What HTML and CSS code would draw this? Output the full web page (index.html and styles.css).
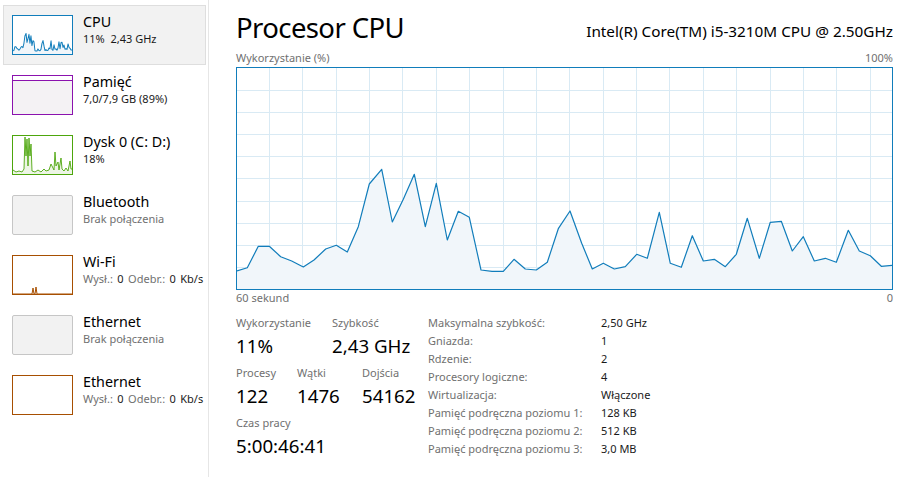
FILE: index.html
```html
<!DOCTYPE html>
<html lang="pl">
<head>
<meta charset="utf-8">
<title>Procesor CPU</title>
<link rel="stylesheet" href="styles.css">
</head>
<body>
<div class="app">
  <nav class="sidebar">
    <div class="item selected">
      <div class="thumb thumb-cpu">
        <svg viewBox="0 0 655 221" preserveAspectRatio="none" width="59" height="38">
          <polygon class="cpu-fill" points="0,203 10.3,199.7 21.3,178.3 32.3,178.3 43.7,188.7 54.7,193 66.3,199 77,192 88.7,181 99.3,177.3 110.3,184 121.3,158.7 132.3,116 144.7,101.3 155.3,154 166.3,131.3 177.3,106.3 188.3,158.7 199.3,115.3 210.3,172 221.3,143.3 232.3,149.3 244,202 255,203.3 266.3,203.3 277,191.3 288.3,201 299.3,202 310.3,194.3 321.3,160.7 333,143 344.7,175.3 355.3,201 366.3,195.3 377.3,201 388.3,198.7 399.7,186.3 410.3,190.3 422.3,144.3 433.3,195.3 444.3,199.3 455.3,167.7 466.3,193 477.3,191.3 488.3,198.7 499.3,186.3 510.3,150.3 522.3,190.3 533.3,154.3 544.3,153.3 555.3,183 566.3,168.7 577.3,193 588.3,190.3 599.3,194.3 611.3,162.3 622.3,183 633.3,187.7 644.3,198.3 655,197.3 655,221 0,221"/>
          <polyline class="cpu-line" vector-effect="non-scaling-stroke" points="0,203 10.3,199.7 21.3,178.3 32.3,178.3 43.7,188.7 54.7,193 66.3,199 77,192 88.7,181 99.3,177.3 110.3,184 121.3,158.7 132.3,116 144.7,101.3 155.3,154 166.3,131.3 177.3,106.3 188.3,158.7 199.3,115.3 210.3,172 221.3,143.3 232.3,149.3 244,202 255,203.3 266.3,203.3 277,191.3 288.3,201 299.3,202 310.3,194.3 321.3,160.7 333,143 344.7,175.3 355.3,201 366.3,195.3 377.3,201 388.3,198.7 399.7,186.3 410.3,190.3 422.3,144.3 433.3,195.3 444.3,199.3 455.3,167.7 466.3,193 477.3,191.3 488.3,198.7 499.3,186.3 510.3,150.3 522.3,190.3 533.3,154.3 544.3,153.3 555.3,183 566.3,168.7 577.3,193 588.3,190.3 599.3,194.3 611.3,162.3 622.3,183 633.3,187.7 644.3,198.3 655,197.3"/>
        </svg>
      </div>
      <div class="info">
        <div class="name">CPU</div>
        <div class="sub dark">11%&nbsp; 2,43 GHz</div>
      </div>
    </div>

    <div class="item">
      <div class="thumb thumb-mem"><div class="mem-fill"></div></div>
      <div class="info">
        <div class="name">Pamięć</div>
        <div class="sub dark">7,0/7,9 GB (89%)</div>
      </div>
    </div>

    <div class="item">
      <div class="thumb thumb-disk">
        <svg viewBox="0 0 59 38" width="59" height="38">
          <polygon class="disk-fill" points="0,34 3,36 6,35 9,36 11,33 12,1 13,20 14,3 15,30 16,2 17,20 18,8 19,35 22,36 25,34 28,36 31,33 33,35 36,34 38,28 40,32 41,34 42,16 43,30 45,26 46,34 48,22 49,33 51,35 53,32 55,35 57,25 58,33 59,33 59,38 0,38"/>
          <polyline class="disk-line" points="0,34 3,36 6,35 9,36 11,33 12,1 13,20 14,3 15,30 16,2 17,20 18,8 19,35 22,36 25,34 28,36 31,33 33,35 36,34 38,28 40,32 41,34 42,16 43,30 45,26 46,34 48,22 49,33 51,35 53,32 55,35 57,25 58,33 59,33"/>
        </svg>
      </div>
      <div class="info">
        <div class="name">Dysk 0 (C: D:)</div>
        <div class="sub dark">18%</div>
      </div>
    </div>

    <div class="item">
      <div class="thumb thumb-off"></div>
      <div class="info">
        <div class="name">Bluetooth</div>
        <div class="sub">Brak połączenia</div>
      </div>
    </div>

    <div class="item">
      <div class="thumb thumb-net">
        <svg viewBox="0 0 59 38" width="59" height="38">
          <polyline class="net-line" points="0,38 19,38 20,32 21,38 22,38 23,31 24,38 59,38"/>
        </svg>
      </div>
      <div class="info">
        <div class="name">Wi-Fi</div>
        <div class="sub net">Wysł.: <span class="dark">0</span> Odebr.: <span class="dark">0 Kb/s</span></div>
      </div>
    </div>

    <div class="item">
      <div class="thumb thumb-off"></div>
      <div class="info">
        <div class="name">Ethernet</div>
        <div class="sub">Brak połączenia</div>
      </div>
    </div>

    <div class="item">
      <div class="thumb thumb-net"></div>
      <div class="info">
        <div class="name">Ethernet</div>
        <div class="sub net">Wysł.: <span class="dark">0</span> Odebr.: <span class="dark">0 Kb/s</span></div>
      </div>
    </div>
  </nav>

  <main class="main">
    <header class="head">
      <h1 class="title">Procesor CPU</h1>
      <div class="model">Intel(R) Core(TM) i5-3210M CPU @ 2.50GHz</div>
    </header>

    <div class="axis axis-top"><span>Wykorzystanie (%)</span><span>100%</span></div>

    <div class="chart">
      <svg viewBox="0 0 655 221" width="655" height="221">
        <g class="grid">
          <line x1="32.5" y1="0" x2="32.5" y2="221"/>
          <line x1="65.5" y1="0" x2="65.5" y2="221"/>
          <line x1="99.5" y1="0" x2="99.5" y2="221"/>
          <line x1="132.5" y1="0" x2="132.5" y2="221"/>
          <line x1="165.5" y1="0" x2="165.5" y2="221"/>
          <line x1="199.5" y1="0" x2="199.5" y2="221"/>
          <line x1="232.5" y1="0" x2="232.5" y2="221"/>
          <line x1="266.5" y1="0" x2="266.5" y2="221"/>
          <line x1="299.5" y1="0" x2="299.5" y2="221"/>
          <line x1="332.5" y1="0" x2="332.5" y2="221"/>
          <line x1="366.5" y1="0" x2="366.5" y2="221"/>
          <line x1="399.5" y1="0" x2="399.5" y2="221"/>
          <line x1="432.5" y1="0" x2="432.5" y2="221"/>
          <line x1="466.5" y1="0" x2="466.5" y2="221"/>
          <line x1="499.5" y1="0" x2="499.5" y2="221"/>
          <line x1="533.5" y1="0" x2="533.5" y2="221"/>
          <line x1="566.5" y1="0" x2="566.5" y2="221"/>
          <line x1="599.5" y1="0" x2="599.5" y2="221"/>
          <line x1="633.5" y1="0" x2="633.5" y2="221"/>
          <line x1="0" y1="22.5" x2="655" y2="22.5"/>
          <line x1="0" y1="44.5" x2="655" y2="44.5"/>
          <line x1="0" y1="66.5" x2="655" y2="66.5"/>
          <line x1="0" y1="88.5" x2="655" y2="88.5"/>
          <line x1="0" y1="110.5" x2="655" y2="110.5"/>
          <line x1="0" y1="133.5" x2="655" y2="133.5"/>
          <line x1="0" y1="155.5" x2="655" y2="155.5"/>
          <line x1="0" y1="177.5" x2="655" y2="177.5"/>
          <line x1="0" y1="199.5" x2="655" y2="199.5"/>
        </g>
        <polygon class="cpu-fill" points="0,203 10.3,199.7 21.3,178.3 32.3,178.3 43.7,188.7 54.7,193 66.3,199 77,192 88.7,181 99.3,177.3 110.3,184 121.3,158.7 132.3,116 144.7,101.3 155.3,154 166.3,131.3 177.3,106.3 188.3,158.7 199.3,115.3 210.3,172 221.3,143.3 232.3,149.3 244,202 255,203.3 266.3,203.3 277,191.3 288.3,201 299.3,202 310.3,194.3 321.3,160.7 333,143 344.7,175.3 355.3,201 366.3,195.3 377.3,201 388.3,198.7 399.7,186.3 410.3,190.3 422.3,144.3 433.3,195.3 444.3,199.3 455.3,167.7 466.3,193 477.3,191.3 488.3,198.7 499.3,186.3 510.3,150.3 522.3,190.3 533.3,154.3 544.3,153.3 555.3,183 566.3,168.7 577.3,193 588.3,190.3 599.3,194.3 611.3,162.3 622.3,183 633.3,187.7 644.3,198.3 655,197.3 655,221 0,221"/>
        <polyline class="cpu-line main-line" points="0,203 10.3,199.7 21.3,178.3 32.3,178.3 43.7,188.7 54.7,193 66.3,199 77,192 88.7,181 99.3,177.3 110.3,184 121.3,158.7 132.3,116 144.7,101.3 155.3,154 166.3,131.3 177.3,106.3 188.3,158.7 199.3,115.3 210.3,172 221.3,143.3 232.3,149.3 244,202 255,203.3 266.3,203.3 277,191.3 288.3,201 299.3,202 310.3,194.3 321.3,160.7 333,143 344.7,175.3 355.3,201 366.3,195.3 377.3,201 388.3,198.7 399.7,186.3 410.3,190.3 422.3,144.3 433.3,195.3 444.3,199.3 455.3,167.7 466.3,193 477.3,191.3 488.3,198.7 499.3,186.3 510.3,150.3 522.3,190.3 533.3,154.3 544.3,153.3 555.3,183 566.3,168.7 577.3,193 588.3,190.3 599.3,194.3 611.3,162.3 622.3,183 633.3,187.7 644.3,198.3 655,197.3"/>
      </svg>
    </div>

    <div class="axis axis-bottom"><span>60 sekund</span><span>0</span></div>

    <section class="stats">
      <div class="dyn">
        <div class="row">
          <div class="stat w96"><div class="label">Wykorzystanie</div><div class="value">11%</div></div>
          <div class="stat"><div class="label">Szybkość</div><div class="value">2,43 GHz</div></div>
        </div>
        <div class="row">
          <div class="stat w61"><div class="label">Procesy</div><div class="value">122</div></div>
          <div class="stat w65"><div class="label">Wątki</div><div class="value">1476</div></div>
          <div class="stat"><div class="label">Dojścia</div><div class="value">54162</div></div>
        </div>
        <div class="row">
          <div class="stat"><div class="label">Czas pracy</div><div class="value">5:00:46:41</div></div>
        </div>
      </div>
      <dl class="specs">
        <dt>Maksymalna szybkość:</dt><dd>2,50 GHz</dd>
        <dt>Gniazda:</dt><dd>1</dd>
        <dt>Rdzenie:</dt><dd>2</dd>
        <dt>Procesory logiczne:</dt><dd>4</dd>
        <dt>Wirtualizacja:</dt><dd>Włączone</dd>
        <dt>Pamięć podręczna poziomu 1:</dt><dd>128 KB</dd>
        <dt>Pamięć podręczna poziomu 2:</dt><dd>512 KB</dd>
        <dt>Pamięć podręczna poziomu 3:</dt><dd>3,0 MB</dd>
      </dl>
    </section>
  </main>
</div>
</body>
</html>
```

FILE: styles.css
```css
* { box-sizing: border-box; }

html, body {
  margin: 0;
  padding: 0;
  background: #ffffff;
}

body {
  font-family: "Noto Sans", "Open Sans", sans-serif;
  color: #000000;
  width: 912px;
  height: 477px;
  overflow: hidden;
}

.app {
  display: flex;
  height: 477px;
}

/* ---------- sidebar ---------- */
.sidebar {
  width: 209px;
  flex: 0 0 209px;
  border-right: 1px solid #e6e6e6;
  padding-top: 5px;
  padding-left: 3px;
}

.item {
  display: flex;
  align-items: flex-start;
  width: 203px;
  height: 60px;
  border: 1px solid transparent;
  padding: 9px 0 0 8px;
}

.item.selected {
  background: #f2f2f2;
  border-color: #dedede;
}

.thumb {
  width: 61px;
  height: 40px;
  flex: 0 0 61px;
  border: 1px solid;
  background: #ffffff;
  overflow: hidden;
}

.thumb svg { display: block; }

.thumb-cpu { border-color: #117dbb; }
.thumb-mem { border-color: #8b12ae; background: #ffffff; }
.thumb-disk { border-color: #4da60c; }
.thumb-net { border-color: #a74f01; }
.thumb-off {
  border-color: #c6c6c6;
  background: #f2f2f2;
  border-radius: 2px;
}

.mem-fill {
  margin-top: 4px;
  height: 34px;
  border-top: 1px solid #8b12ae;
  background: #f4f2f4;
}

.cpu-fill { fill: #f1f6fa; }
.cpu-line { fill: none; stroke: #117dbb; stroke-width: 1; stroke-linejoin: round; }
.main-line { stroke-width: 1.2; }
.disk-fill { fill: #edf5e5; }
.disk-line { fill: none; stroke: #4da60c; stroke-width: 0.9; }
.net-line { fill: none; stroke: #a74f01; stroke-width: 1; }

.info {
  margin-left: 10px;
  margin-top: -2px;
}

.name {
  font-size: 14.3px;
  line-height: 18px;
  color: #000000;
}

.sub {
  font-size: 11px;
  line-height: 15px;
  color: #707070;
  white-space: nowrap;
}

.sub.net { word-spacing: 1.6px; }

.dark { color: #1a1a1a; }

/* ---------- main ---------- */
.main {
  flex: 1;
  padding-left: 27px;
  padding-right: 19px;
}

.head {
  display: flex;
  justify-content: space-between;
  align-items: flex-start;
  height: 51px;
}

.title {
  margin: 0;
  padding-top: 8px;
  font-size: 27.5px;
  line-height: 40px;
  font-weight: 400;
  letter-spacing: -0.6px;
}

.model {
  padding-top: 21px;
  font-size: 15.3px;
  line-height: 20px;
}

.axis {
  display: flex;
  justify-content: space-between;
  font-size: 11px;
  line-height: 14px;
  color: #707070;
}

.axis-top {
  margin-bottom: 2px;
}

.axis-bottom {
  margin-top: 1px;
}

.chart {
  width: 657px;
  height: 223px;
  border: 1px solid #117dbb;
}

.chart svg { display: block; }

.grid line {
  stroke: #d9eaf4;
  stroke-width: 1;
}

/* ---------- stats ---------- */
.stats {
  display: flex;
  margin-top: 9px;
}

.dyn {
  width: 192px;
  flex: 0 0 192px;
  padding-top: 1px;
}

.row {
  display: flex;
  height: 50px;
}

.w96 { width: 96px; }
.w61 { width: 61px; }
.w65 { width: 65px; }

.label {
  font-size: 11px;
  line-height: 16px;
  color: #707070;
  white-space: nowrap;
}

.value {
  margin-top: 3px;
  font-size: 18.7px;
  line-height: 24px;
  white-space: nowrap;
}

.specs {
  display: grid;
  grid-template-columns: 173px auto;
  grid-auto-rows: 18px;
  margin: 0;
  font-size: 11px;
  line-height: 18px;
}

.specs dt {
  color: #707070;
  white-space: nowrap;
}

.specs dd {
  margin: 0;
  color: #1a1a1a;
}
```
